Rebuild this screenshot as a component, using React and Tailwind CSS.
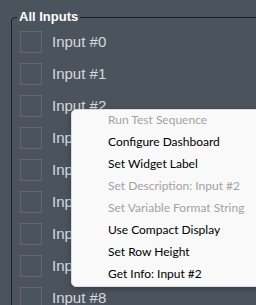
import React from 'react';

const inputs = [0, 1, 2, 3, 4, 5, 6, 7, 8];

const menuItems = [
    { label: 'Run Test Sequence', disabled: true },
    { label: 'Configure Dashboard' },
    { label: 'Set Widget Label' },
    { label: 'Set Description: Input #2', disabled: true },
    { label: 'Set Variable Format String', disabled: true },
    { label: 'Use Compact Display' },
    { label: 'Set Row Height' },
    { label: 'Get Info: Input #2' },
];

const App = () => {
    return (
        <div className="relative w-[256px] h-[305px] overflow-hidden bg-[#4b535d] font-['Liberation_Sans',Arial,sans-serif]">
            <div className="relative ml-[11px] mt-[17px] w-[280px] h-[320px] border border-[#18212a] rounded-tl-[4px]">
                <span className="absolute -top-[9px] left-[5px] px-[2px] bg-[#4b535d] text-white text-[13px] font-bold leading-[16px]">
                    All Inputs
                </span>
                <div className="flex flex-col gap-[10px] pt-[13px] pl-[8px]">
                    {inputs.map(i => (
                        <div key={i} className="flex items-center gap-[10px] h-[22px]">
                            <div className="w-[22px] h-[22px] border border-[#66676b]" />
                            <span className="text-[15px] text-[#d6dadf] leading-[18px]">Input #{i}</span>
                        </div>
                    ))}
                </div>
            </div>

            <div className="absolute left-[71px] top-[109px] w-[200px] bg-[#f9f9f9] border border-[#dcdcdc] rounded-[5px] shadow-[0_2px_6px_rgba(0,0,0,0.25)] font-['Lato',sans-serif]">
                {menuItems.map(item => (
                    <div
                        key={item.label}
                        className={`h-[22px] pl-[36px] text-[12px] leading-[19px] ${item.disabled ? 'text-[#a3a3a3]' : 'text-black'}`}
                    >
                        {item.label}
                    </div>
                ))}
            </div>
        </div>
    );
};

export default App;
